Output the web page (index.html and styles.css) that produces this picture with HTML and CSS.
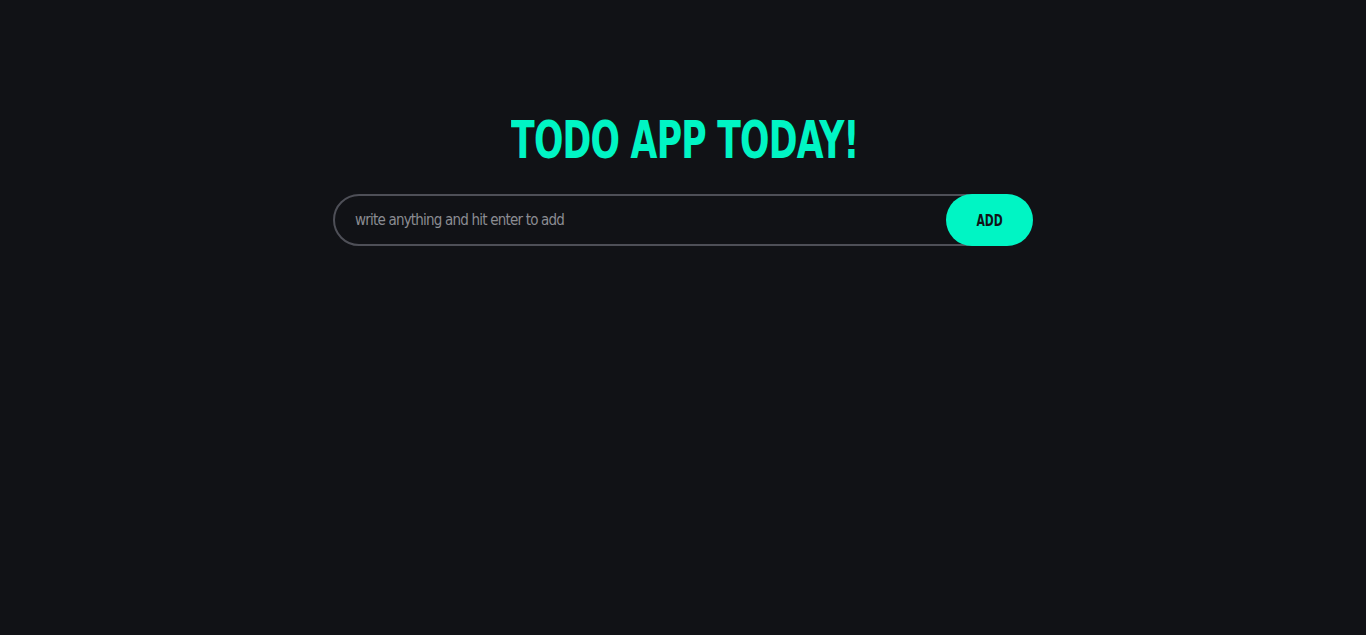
FILE: index.html
```html
<!DOCTYPE html>
<html lang="en">
<head>
<meta charset="utf-8">
<title>Todo App</title>
<link rel="stylesheet" href="styles.css">
</head>
<body>
<main class="app">
  <h1 class="title"><span class="title-text">TODO APP TODAY!</span></h1>
  <form class="add-form">
    <input class="add-input" type="text" placeholder="write anything and hit enter to add">
    <button class="add-btn" type="button"><span class="btn-text">ADD</span></button>
  </form>
</main>
</body>
</html>
```
FILE: styles.css
```css
html, body {
  margin: 0;
  padding: 0;
  background: #111216;
  height: 100%;
}
body {
  font-family: "DejaVu Sans Condensed", "DejaVu Sans", sans-serif;
  font-stretch: condensed;
}
.app {
  display: flex;
  flex-direction: column;
  align-items: center;
  padding-top: 108px;
}
.title {
  margin: 0 0 0 3px;
  color: #00f5c4;
  font-size: 52px;
  font-weight: 700;
  line-height: 64px;
  letter-spacing: -1px;
}
.title-text {
  display: inline-block;
  transform: scaleX(0.74);
}
.add-form {
  position: relative;
  width: 700px;
  height: 52px;
  margin-top: 22px;
}
.add-input {
  box-sizing: border-box;
  width: 660px;
  height: 52px;
  margin: 0;
  padding: 0 20px;
  background: transparent;
  border: 2px solid #4e4f57;
  border-radius: 26px;
  color: #ddd;
  font-family: inherit;
  font-stretch: condensed;
  font-size: 15px;
  letter-spacing: -0.8px;
  outline: none;
}
.add-input::placeholder {
  color: #8b8c92;
}
.add-btn {
  position: absolute;
  right: 0;
  top: 0;
  width: 87px;
  height: 52px;
  border: none;
  border-radius: 26px;
  background: #00f5c4;
  color: #111216;
  font-family: inherit;
  font-stretch: condensed;
  font-weight: 700;
  font-size: 16px;
  cursor: pointer;
}
.btn-text {
  display: inline-block;
  transform: scaleX(0.75);
}
```
